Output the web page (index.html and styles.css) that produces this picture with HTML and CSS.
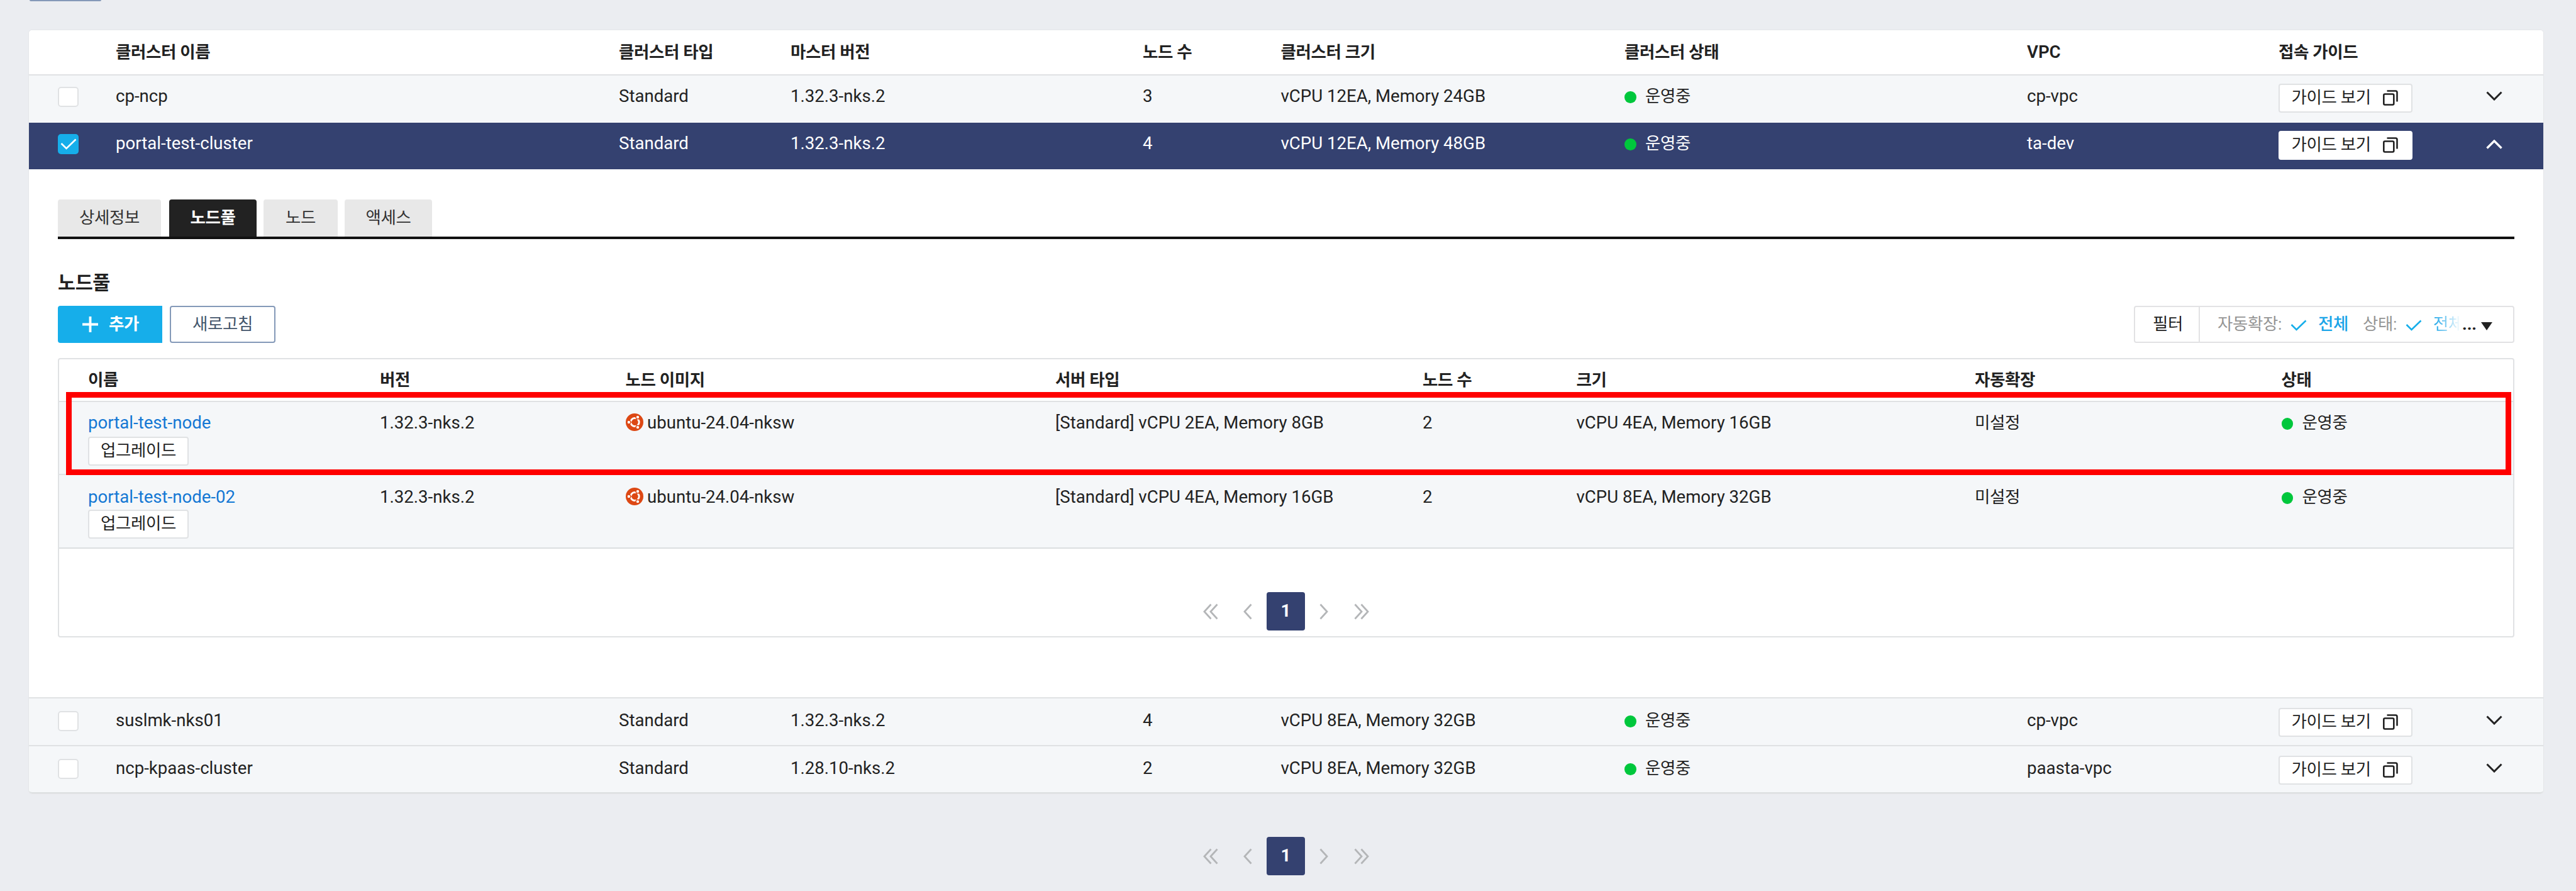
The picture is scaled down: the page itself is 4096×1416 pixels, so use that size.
FILE: index.html
```html
<!DOCTYPE html>
<html lang="ko">
<head>
<meta charset="utf-8">
<title>클러스터</title>
<link rel="stylesheet" href="styles.css">
</head>
<body>
<svg class="defs" width="0" height="0">
  <symbol id="copy" viewBox="0 0 24 25"><path d="M6.500 1.500H20a2.500 2.500 0 0 1 2.500 2.500V18.500" fill="none" stroke="currentColor" stroke-width="2.600"/><rect x="1.300" y="6.500" width="16" height="17" rx="2" fill="none" stroke="currentColor" stroke-width="2.600"/></symbol>
  <symbol id="down" viewBox="0 0 26 15"><path d="M1.500 1.500L13 13L24.500 1.500" fill="none" stroke="currentColor" stroke-width="3"/></symbol>
  <symbol id="up" viewBox="0 0 26 15"><path d="M1.500 13.500L13 2L24.500 13.500" fill="none" stroke="currentColor" stroke-width="3.400"/></symbol>
  <symbol id="check" viewBox="0 0 26 18"><path d="M1.500 8L9.500 16L24.500 1.500" fill="none" stroke="currentColor" stroke-width="2.600"/></symbol>
  <symbol id="prev" viewBox="0 0 14 26"><path d="M12.500 1.500L2 13L12.500 24.500" fill="none" stroke="currentColor" stroke-width="2.800"/></symbol>
  <symbol id="next" viewBox="0 0 14 26"><path d="M1.500 1.500L12 13L1.500 24.500" fill="none" stroke="currentColor" stroke-width="2.800"/></symbol>
  <symbol id="first" viewBox="0 0 24 26"><path d="M12.500 1.500L2 13L12.500 24.500M22.500 1.500L12 13L22.500 24.500" fill="none" stroke="currentColor" stroke-width="2.800"/></symbol>
  <symbol id="last" viewBox="0 0 24 26"><path d="M1.500 1.500L12 13L1.500 24.500M11.500 1.500L22 13L11.500 24.500" fill="none" stroke="currentColor" stroke-width="2.800"/></symbol>
  <symbol id="ubuntu" viewBox="0 0 28 28"><circle cx="14" cy="14" r="14" fill="#dd4814"/><circle cx="14.500" cy="14" r="6.600" fill="none" stroke="#fff" stroke-width="3"/><g stroke="#dd4814" stroke-width="1.400"><path d="M14.500 14H4M14.500 14L20 4.500M14.500 14L20 23.500" stroke-width="1.200"/><circle cx="4.900" cy="14" r="2.900" fill="#fff"/><circle cx="19" cy="5.900" r="2.900" fill="#fff"/><circle cx="19" cy="22.100" r="2.900" fill="#fff"/></g><circle cx="14.500" cy="14" r="5" fill="#dd4814"/></symbol>
</svg>

<div class="stub"></div>

<main class="card">
  <div class="row head ko">
    <span></span><span>클러스터 이름</span><span>클러스터 타입</span><span>마스터 버전</span><span>노드 수</span><span>클러스터 크기</span><span>클러스터 상태</span><span class="en">VPC</span><span>접속 가이드</span><span></span>
  </div>
  <div class="row first">
    <i class="box"></i><span>cp-ncp</span><span>Standard</span><span>1.32.3-nks.2</span><span>3</span><span>vCPU 12EA, Memory 24GB</span><span class="status ko">운영중</span><span>cp-vpc</span>
    <button class="guide ko">가이드 보기<svg><use href="#copy"/></svg></button><svg class="chev"><use href="#down"/></svg>
  </div>
  <div class="row selected">
    <i class="box on"><svg><use href="#check"/></svg></i><span>portal-test-cluster</span><span>Standard</span><span>1.32.3-nks.2</span><span>4</span><span>vCPU 12EA, Memory 48GB</span><span class="status ko">운영중</span><span>ta-dev</span>
    <button class="guide ko">가이드 보기<svg><use href="#copy"/></svg></button><svg class="chev"><use href="#up"/></svg>
  </div>

  <section class="detail">
    <nav class="tabs ko"><a class="t1">상세정보</a><a class="t2 active">노드풀</a><a class="t3">노드</a><a class="t4">액세스</a></nav>
    <h2 class="ko">노드풀</h2>
    <div class="toolbar ko">
      <button class="add"><svg viewBox="0 0 26 26"><path d="M13 0V26M0 13H26" stroke="#fff" stroke-width="4"/></svg>추가</button>
      <button class="refresh">새로고침</button>
      <div class="filter">
        <span class="filter-label">필터</span>
        <div class="filter-body"><span class="k k1">자동확장:</span><svg class="tick"><use href="#check"/></svg><span class="v v1">전체</span><span class="k k2">상태:</span><svg class="tick"><use href="#check"/></svg><span class="v fade">전체</span><span class="dots">...</span><i class="caret"></i></div>
      </div>
    </div>

    <div class="pool">
      <div class="prow phead ko"><span>이름</span><span>버전</span><span>노드 이미지</span><span>서버 타입</span><span>노드 수</span><span>크기</span><span>자동확장</span><span>상태</span></div>
      <div class="prow p1">
        <div><a>portal-test-node</a><button class="upgrade ko">업그레이드</button></div><span>1.32.3-nks.2</span><span class="os"><svg><use href="#ubuntu"/></svg>ubuntu-24.04-nksw</span><span>[Standard] vCPU 2EA, Memory 8GB</span><span>2</span><span>vCPU 4EA, Memory 16GB</span><span class="ko">미설정</span><span class="status ko">운영중</span>
      </div>
      <div class="prow p2">
        <div><a>portal-test-node-02</a><button class="upgrade ko">업그레이드</button></div><span>1.32.3-nks.2</span><span class="os"><svg><use href="#ubuntu"/></svg>ubuntu-24.04-nksw</span><span>[Standard] vCPU 4EA, Memory 16GB</span><span>2</span><span>vCPU 8EA, Memory 32GB</span><span class="ko">미설정</span><span class="status ko">운영중</span>
      </div>
      <div class="pager inner"><svg class="dbl"><use href="#first"/></svg><svg class="sgl"><use href="#prev"/></svg><b>1</b><svg class="sgl"><use href="#next"/></svg><svg class="dbl"><use href="#last"/></svg></div>
      <div class="highlight"></div>
    </div>
  </section>

  <div class="row low">
    <i class="box"></i><span>suslmk-nks01</span><span>Standard</span><span>1.32.3-nks.2</span><span>4</span><span>vCPU 8EA, Memory 32GB</span><span class="status ko">운영중</span><span>cp-vpc</span>
    <button class="guide ko">가이드 보기<svg><use href="#copy"/></svg></button><svg class="chev"><use href="#down"/></svg>
  </div>
  <div class="row low bottom">
    <i class="box"></i><span>ncp-kpaas-cluster</span><span>Standard</span><span>1.28.10-nks.2</span><span>2</span><span>vCPU 8EA, Memory 32GB</span><span class="status ko">운영중</span><span>paasta-vpc</span>
    <button class="guide ko">가이드 보기<svg><use href="#copy"/></svg></button><svg class="chev"><use href="#down"/></svg>
  </div>
</main>

<div class="pager outer"><svg class="dbl"><use href="#first"/></svg><svg class="sgl"><use href="#prev"/></svg><b>1</b><svg class="sgl"><use href="#next"/></svg><svg class="dbl"><use href="#last"/></svg></div>
</body>
</html>
```
FILE: styles.css
```css
* { box-sizing: border-box; }
html, body { margin: 0; height: 1416px; overflow: hidden; }
body {
  background: #ebedf1;
  color: #222;
  font-family: Roboto, "Noto Sans CJK KR", sans-serif;
  font-size: 27.6px;
  line-height: 36px;
  white-space: nowrap;
}
.defs { display: block; }
button { font-family: inherit; line-height: inherit; color: inherit; padding: 0; margin: 0; }
.ko, .ko button { font-size: 26.5px; letter-spacing: -0.38px; }
.en { font-size: 27.6px; letter-spacing: 0; }

.stub { width: 114px; height: 2px; margin-left: 47px; background: #8499b8; border-radius: 0 0 4px 4px; }

.card { width: 3998px; margin: 46px 0 0 46px; background: #fff; border-radius: 5px; box-shadow: 0 0 0 1px #e4e6e9; }
.row {
  display: grid;
  grid-template-columns: 92px 800px 273px 560px 219.5px 546.5px 640px 400px 330px 1fr;
  align-items: start;
  padding-left: 46px;
  background: #f5f7f9;
}
.head { height: 70px; padding-top: 17px; font-weight: 700; background: #fff; border-radius: 5px 5px 0 0; }
.head .en { font-weight: 600; }
.first { height: 77px; padding-top: 15px; border-top: 2px solid #e0e2e4; }
.selected { height: 74px; padding-top: 15px; background: #344170; color: #fff; }
.low { height: 76px; padding-top: 17px; border-top: 2px solid #e0e2e4; }
.bottom { height: 77px; border-bottom: 2px solid #dcdfe0; border-radius: 0 0 5px 5px; }

.box { width: 33px; height: 32px; margin-top: 3px; background: #fff; border: 2px solid #e0e2e4; border-radius: 5px; }
.box.on { display: flex; align-items: center; justify-content: center; background: #16aeea; border: 0; color: #fff; }
.box.on svg { width: 26px; height: 18px; }

.status { display: flex; align-items: center; gap: 14.5px; }
.status::before { content: ""; width: 18.5px; height: 18.5px; margin-top: 3px; border-radius: 50%; background: #00c73c; }

.guide {
  display: flex; align-items: center; justify-content: space-between;
  width: 213px; height: 46px; margin-top: -2px; padding: 0 21px 2px 18.5px;
  background: #fff; border: 2px solid #e0e2e4; border-radius: 4px; color: #222;
}
.guide svg { width: 24px; height: 25px; }
.selected .guide { border-color: #fff; }
.chev { width: 26px; height: 15px; margin-top: 10px; }
.selected .chev { margin-top: 12px; }

.detail { height: 839px; padding: 48px 46px 0; }
.tabs { display: flex; height: 63px; border-bottom: 4px solid #111; color: #333; }
.tabs a { height: 59px; padding-top: 11px; text-align: center; background: #e8e8e8; border-radius: 4px 4px 0 0; }
.tabs .t1 { width: 164px; margin-right: 13px; }
.tabs .t2 { width: 139px; margin-right: 11px; }
.tabs .t3 { width: 118px; margin-right: 11px; }
.tabs .t4 { width: 139px; }
.tabs .active { background: #222; color: #fff; font-weight: 700; }
h2.ko { margin: 52px 0 0; font-size: 30.5px; line-height: 36px; height: 36px; }

.toolbar { display: flex; margin-top: 18px; height: 59px; }
.add { display: flex; align-items: center; width: 166px; padding: 0 0 1px 39px; gap: 17px; border: 0; border-radius: 4px 0 0 4px; background: #16aeea; color: #fff; font-weight: 700; }
.add svg { width: 25px; height: 25px; }
.refresh { width: 168px; margin-left: 12px; padding-bottom: 1px; background: #fff; border: 2px solid #8499b8; border-radius: 4px; color: #44566c; }
.toolbar .add, .toolbar .refresh { height: 59px; }
.filter { display: flex; align-items: center; width: 605px; margin-left: auto; border: 2px solid #e2e2e4; border-radius: 4px; }
.filter-label { width: 103px; height: 55px; padding: 9px 0 0 28px; border-right: 2px solid #e2e2e4; }
.filter-body { display: flex; align-items: center; height: 55px; padding: 0 0 1px 28px; }
.k { color: #959595; }
.k1 { width: 116px; }
.k2 { width: 68px; }
.tick { width: 26px; height: 18px; margin-top: 3px; color: #16aeea; }
.v { color: #1ba5e8; margin-left: 18px; }
.v1 { width: 71px; font-weight: 500; }
.fade { width: 50px; margin-right: -9px; -webkit-mask-image: linear-gradient(90deg, #000 0%, transparent 88%); mask-image: linear-gradient(90deg, #000 0%, transparent 88%); }
.dots { margin-left: 5px; width: 30px; font-weight: 700; letter-spacing: 0; }
.caret { border: 9px solid transparent; border-top: 13px solid #222; border-bottom: 0; margin-top: 7px; }

.pool { position: relative; height: 444px; margin-top: 24px; border: 2px solid #e0e2e4; border-radius: 4px; }
.prow {
  display: grid;
  grid-template-columns: 464px 390.5px 683.5px 584px 244.5px 633.5px 487.5px 1fr;
  align-items: start;
  padding-left: 46px;
}
.phead { height: 66px; padding-top: 15px; font-weight: 700; }
.p1, .p2 { background: #f5f7f9; border-top: 2px solid #e0e2e4; }
.p1 { height: 116px; padding-top: 15px; }
.p2 { height: 119px; padding-top: 17px; border-bottom: 2px solid #dcdee0; }
.prow a { display: block; color: #1478d4; }
.upgrade { display: block; width: 160px; height: 46px; margin-top: 4px; padding-bottom: 2px; background: #fff; border: 2px solid #e0e2e4; border-radius: 4px; }
.p2 .upgrade { margin-top: 2px; }
.os { display: flex; align-items: center; gap: 6.5px; }
.os svg { width: 28px; height: 28px; margin-top: -2px; }

.pager { display: flex; align-items: center; justify-content: center; color: #b4b6b8; }
.pager svg { flex: none; height: 26px; }
.dbl { width: 24px; }
.sgl { width: 14px; }
.pager b { width: 61px; height: 61px; margin: 0 23px; padding-top: 12px; text-align: center; background: #344170; color: #fff; border-radius: 4px; font-weight: 700; }
.pager .dbl:first-child { margin-right: 40px; }
.pager .dbl:last-child { margin-left: 41px; }
.inner { margin-top: 69px; }
.outer { width: 4090px; margin-top: 69px; }

.highlight { position: absolute; left: 11px; top: 52px; width: 3888px; height: 132px; border: 9px solid #f00; }
```
